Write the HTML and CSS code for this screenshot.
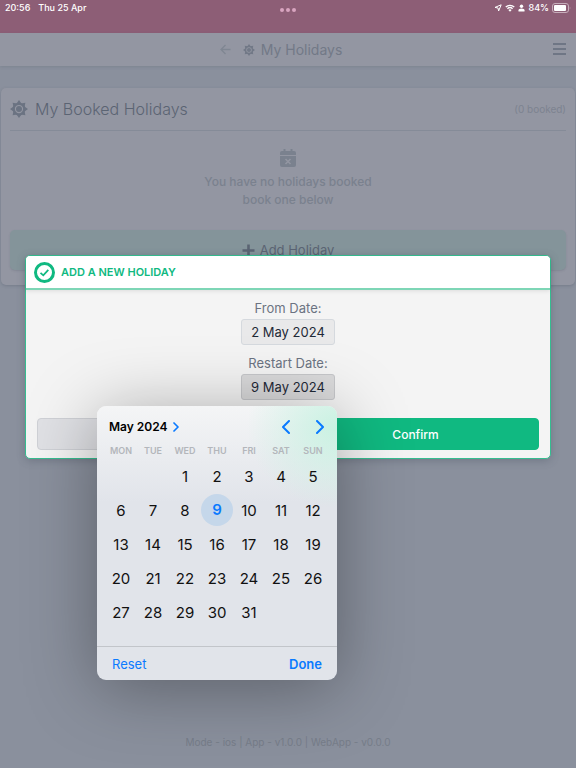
FILE: index.html
```html
<!DOCTYPE html>
<html lang="en">
<head>
    <meta charset="utf-8">
    <meta name="viewport" content="width=device-width, initial-scale=1">
    <title>My Holidays</title>
    <link rel="stylesheet" href="styles.css">
</head>
<body>
    <svg class="symbols" aria-hidden="true">
        <symbol id="sun" viewBox="0 0 24 24">
            <circle cx="12" cy="12" r="7" fill="none" stroke="currentColor" stroke-width="3"/>
            <circle cx="12" cy="12" r="4" fill="currentColor"/>
            <g id="rays" fill="currentColor">
                <path id="ray" d="M8.5 5 L12 0 L15.5 5 Z M8.5 19 L12 24 L15.5 19 Z"/>
                <use href="#ray" transform="rotate(45 12 12)"/>
                <use href="#ray" transform="rotate(90 12 12)"/>
                <use href="#ray" transform="rotate(135 12 12)"/>
            </g>
        </symbol>
    </svg>

    <div class="page">
        <div class="status-bar">
            <div class="status-time"><span>20:56</span><span>Thu 25 Apr</span></div>
            <div class="status-dots"><i></i><i></i><i></i></div>
            <div class="status-icons">
                <svg width="8" height="8" viewBox="0 0 8 8"><path d="M7.2 .8 L4.6 7 L4 4 L1 3.4 Z" fill="none" stroke="#fff" stroke-linejoin="round"/></svg>
                <svg width="10" height="8" viewBox="0 0 20 15">
                    <path d="M1.5 5.5 A12.4 12.4 0 0 1 18.5 5.5 M4.8 9 A7.6 7.6 0 0 1 15.2 9" fill="none" stroke="#fff" stroke-width="2.6"/>
                    <path d="M10 15 L6.8 11.6 A4.6 4.6 0 0 1 13.2 11.6 Z" fill="#fff"/>
                </svg>
                <svg width="7" height="8" viewBox="0 0 7 8"><circle cx="3.500" cy="2.200" r="1.700" fill="#fff"/><path d="M.5 7.500 V6.300 Q.5 4.600 3.500 4.600 T6.500 6.300 V7.500 Z" fill="#fff"/></svg>
                <span>84%</span>
                <svg width="19" height="10" viewBox="0 0 19 10">
                    <rect x=".5" y=".5" width="16" height="9" rx="2.500" fill="none" stroke="#c7aebb"/>
                    <rect x="2" y="2" width="12" height="6" rx="1" fill="#fff"/>
                    <path d="M17.800 3.500 Q19 5 17.800 6.500 Z" fill="#c7aebb"/>
                </svg>
            </div>
        </div>

        <header class="navbar">
            <a class="back" href="#" aria-label="Back">
                <svg width="11" height="11" viewBox="0 0 11 11"><path d="M10.500 5.500 H1 M5.500 1 L1 5.500 L5.500 10" fill="none" stroke="currentColor" stroke-width="1.300"/></svg>
            </a>
            <svg width="12" height="12"><use href="#sun"/></svg>
            <span class="navbar-title">My Holidays</span>
            <button class="menu" type="button" aria-label="Menu"><i></i><i></i><i></i></button>
        </header>

        <main class="card">
            <div class="card-header">
                <svg width="18" height="18"><use href="#sun"/></svg>
                <h1>My Booked Holidays</h1>
                <span class="count">(0 booked)</span>
            </div>
            <div class="empty">
                <svg width="16" height="18" viewBox="0 0 16 18">
                    <path d="M0 6 V4 Q0 2 2 2 H3.500 V0 H5.500 V2 H10.500 V0 H12.500 V2 H14 Q16 2 16 4 V6 Z" fill="currentColor"/>
                    <path d="M0 7 H16 V16 Q16 18 14 18 H2 Q0 18 0 16 Z" fill="currentColor"/>
                    <path d="M5.500 10 L10.500 15 M10.500 10 L5.500 15" stroke="#9396a2" stroke-width="1.600"/>
                </svg>
                <p>You have no holidays booked<br>book one below</p>
            </div>
            <button class="add" type="button">
                <svg width="13" height="13" viewBox="0 0 13 13"><path d="M6.500 .5 V12.500 M.5 6.500 H12.500" stroke="currentColor" stroke-width="2.600"/></svg>
                Add Holiday
            </button>
        </main>

        <footer class="version">Mode - ios | App - v1.0.0 | WebApp - v0.0.0</footer>
    </div>

    <div class="overlay">
        <form class="modal">
            <div class="modal-header">
                <svg width="21" height="21" viewBox="0 0 21 21">
                    <circle cx="10.500" cy="10.500" r="9" fill="none" stroke="currentColor" stroke-width="3"/>
                    <path d="M6.500 10.800 L9.300 13.300 L14.300 7.800" fill="none" stroke="currentColor" stroke-width="1.800"/>
                </svg>
                <h2>Add a new holiday</h2>
            </div>
            <div class="modal-body">
                <div class="field">
                    <label for="from">From Date:</label>
                    <input id="from" type="text" value="2 May 2024" readonly>
                </div>
                <div class="field">
                    <label for="restart">Restart Date:</label>
                    <input id="restart" class="active" type="text" value="9 May 2024" readonly>
                    <div class="picker">
                        <div class="picker-header">
                            <button class="month" type="button">May 2024
                                <svg width="6" height="10" viewBox="0 0 6 10"><path d="M1 1 L5 5 L1 9" fill="none" stroke="#0a7aff" stroke-width="1.700" stroke-linecap="round" stroke-linejoin="round"/></svg>
                            </button>
                            <button type="button" aria-label="Previous month">
                                <svg width="8" height="14" viewBox="0 0 8 14"><path d="M7 1 L1 7 L7 13" fill="none" stroke="#0a7aff" stroke-width="2" stroke-linecap="round" stroke-linejoin="round"/></svg>
                            </button>
                            <button type="button" aria-label="Next month">
                                <svg width="8" height="14" viewBox="0 0 8 14"><path d="M1 1 L7 7 L1 13" fill="none" stroke="#0a7aff" stroke-width="2" stroke-linecap="round" stroke-linejoin="round"/></svg>
                            </button>
                        </div>
                        <table class="days">
                            <thead>
                                <tr><th>MON</th><th>TUE</th><th>WED</th><th>THU</th><th>FRI</th><th>SAT</th><th>SUN</th></tr>
                            </thead>
                            <tbody>
                                <tr><td></td><td></td><td>1</td><td>2</td><td>3</td><td>4</td><td>5</td></tr>
                                <tr><td>6</td><td>7</td><td>8</td><td><span class="selected">9</span></td><td>10</td><td>11</td><td>12</td></tr>
                                <tr><td>13</td><td>14</td><td>15</td><td>16</td><td>17</td><td>18</td><td>19</td></tr>
                                <tr><td>20</td><td>21</td><td>22</td><td>23</td><td>24</td><td>25</td><td>26</td></tr>
                                <tr><td>27</td><td>28</td><td>29</td><td>30</td><td>31</td><td></td><td></td></tr>
                            </tbody>
                        </table>
                        <div class="picker-footer">
                            <button type="button">Reset</button>
                            <button class="done" type="button">Done</button>
                        </div>
                    </div>
                </div>
                <div class="actions">
                    <button class="btn" type="button" aria-label="Cancel"></button>
                    <button class="btn btn-confirm" type="submit">Confirm</button>
                </div>
            </div>
        </form>
    </div>
</body>
</html>
```

FILE: styles.css
```css
* {
  box-sizing: border-box;
}
body {
  margin: 0;
  font-family: Inter, "Liberation Sans", sans-serif;
  font-size: 13px;
  background-color: #8a909d;
  color: #6b7382;
}
button,
input {
  font: inherit;
  color: inherit;
}
button {
  padding: 0;
  border: 0;
  background: none;
}
svg {
  display: block;
  flex: none;
}
.symbols {
  position: absolute;
  width: 0;
  height: 0;
}
.page {
  display: flex;
  flex-direction: column;
  min-height: 100vh;
}

/* status bar */
.status-bar {
  display: grid;
  grid-template-columns: 1fr auto 1fr;
  height: 33px;
  padding: 2px 5px 0;
  background-color: #8d5e76;
  color: #fff;
  font-size: 9px;
  font-weight: 500;
  line-height: 12px;
}
.status-time {
  display: flex;
  gap: 8px;
}
.status-dots {
  display: flex;
  gap: 2px;
  padding-top: 6px;
}
.status-dots i {
  width: 4px;
  height: 4px;
  border-radius: 50%;
  background-color: #d9a5c0;
}
.status-icons {
  display: flex;
  justify-content: flex-end;
  align-items: center;
  gap: 3px;
  height: 12px;
}

/* nav */
.navbar {
  position: relative;
  display: flex;
  align-items: center;
  justify-content: center;
  gap: 6px;
  height: 33px;
  padding-right: 14px;
  background-color: #9396a2;
  box-shadow: 0 1px 3px rgba(70, 80, 95, .2);
  color: #727987;
}
.back {
  margin-right: 6px;
  color: #7f8692;
}
.navbar-title {
  font-size: 14px;
}
.menu {
  position: absolute;
  top: 10px;
  right: 10px;
  display: grid;
  gap: 3px;
  width: 13px;
}
.menu i {
  height: 2px;
  background-color: #6f7685;
}

/* booked holidays */
.card {
  margin: 22px 1px 0;
  padding: 0 9px 15px;
  border-radius: 5px;
  background-color: #9396a2;
  box-shadow: 0 1px 3px rgba(70, 80, 95, .3);
}
.card-header {
  display: flex;
  align-items: center;
  gap: 7px;
  height: 43px;
  border-bottom: 1px solid #858b98;
}
.card-header h1 {
  margin: 0;
  font-size: 16px;
  font-weight: 300;
  color: #5b6473;
}
.count {
  margin-left: auto;
  font-size: 10px;
  color: #7d8390;
}
.empty {
  display: flex;
  flex-direction: column;
  align-items: center;
  gap: 6px;
  padding: 18px 0 21px;
  color: #7a818e;
}
.empty p {
  margin: 0;
  font-size: 12px;
  font-weight: 500;
  line-height: 18px;
  text-align: center;
}
.add {
  display: flex;
  align-items: center;
  justify-content: center;
  gap: 5px;
  width: 100%;
  height: 40px;
  border-radius: 5px;
  background-color: #84949a;
  color: #5b6473;
  box-shadow: 0 1px 2px rgba(70, 80, 95, .2);
}
.version {
  margin-top: auto;
  padding-bottom: 19px;
  font-size: 10px;
  line-height: 14px;
  text-align: center;
  color: #767d89;
}

/* add holiday */
.overlay {
  position: absolute;
  top: 0;
  left: 0;
  width: 100%;
  padding: 255px 25px 0;
}
.modal {
  border: 1px solid #35bd90;
  border-radius: 5px;
  background-color: #f4f4f4;
  box-shadow: 0 2px 8px rgba(60, 70, 85, .3);
}
.modal-header {
  display: flex;
  align-items: center;
  gap: 6px;
  height: 34px;
  padding: 0 8px;
  border-bottom: 2px solid #7ed6b6;
  border-radius: 4px 4px 0 0;
  background-color: #fff;
  box-shadow: 0 1px 4px rgba(0, 0, 0, .1);
  color: #10b981;
}
.modal-header h2 {
  margin: 0;
  font-size: 11px;
  font-weight: 600;
  text-transform: uppercase;
}
.modal-body {
  padding: 8px 11px 8px;
}
.field {
  position: relative;
  display: flex;
  flex-direction: column;
  align-items: center;
  gap: 1px;
  width: 94px;
  margin: 0 auto 8px;
}
.field label {
  line-height: 20px;
  white-space: nowrap;
}
.field input {
  width: 94px;
  height: 26px;
  padding: 0;
  border: 1px solid #d5d9de;
  border-radius: 3px;
  background-color: #e9e9ea;
  color: #1f2937;
  text-align: center;
}
.field input.active {
  border-color: #c6c7ca;
  background-color: #dadadb;
}
.actions {
  display: grid;
  grid-template-columns: 1fr 1fr;
  gap: 8px;
  padding-top: 10px;
}
.btn {
  height: 32px;
  border: 1px solid #cfd1d6;
  border-radius: 4px;
  background-color: #e0e1e5;
  font-size: 12px;
  font-weight: 500;
}
.btn-confirm {
  border-color: #10b981;
  background-color: #10b981;
  color: #fff;
}

/* date picker */
.picker {
  position: absolute;
  z-index: 1;
  top: 53px;
  right: -2px;
  width: 240px;
  border-radius: 9px;
  background:
    radial-gradient(ellipse 90px 80px at 100% 8%, #c9f2e2, rgba(201, 242, 226, 0)),
    linear-gradient(#f4f5f6, #e1e4ea 35%);
  box-shadow: 0 8px 70px rgba(0, 0, 0, .34);
}
.picker-header {
  display: flex;
  align-items: center;
  gap: 26px;
  height: 36px;
  padding: 5px 13px 0 12px;
}
.month {
  display: flex;
  align-items: center;
  gap: 5px;
  margin-right: auto;
  color: #000;
  font-size: 12px;
  font-weight: 600;
}
.days {
  width: 224px;
  margin: 0 auto;
  border-collapse: collapse;
  table-layout: fixed;
  color: #111;
  font-size: 15px;
}
.days th {
  height: 17px;
  padding: 0;
  color: #b3b6bb;
  font-size: 9px;
  font-weight: 600;
}
.days td {
  height: 34px;
  padding: 0;
  text-align: center;
}
.selected {
  display: block;
  height: 32px;
  border-radius: 50%;
  background-color: #c5d7ea;
  color: #0a7aff;
  font-weight: 600;
  line-height: 32px;
}
.picker-footer {
  display: flex;
  align-items: center;
  justify-content: space-between;
  height: 34px;
  margin-top: 17px;
  padding: 0 15px;
  border-top: 1px solid #c2c5ca;
  color: #0a7aff;
}
.picker-footer .done {
  font-weight: 600;
}
```
